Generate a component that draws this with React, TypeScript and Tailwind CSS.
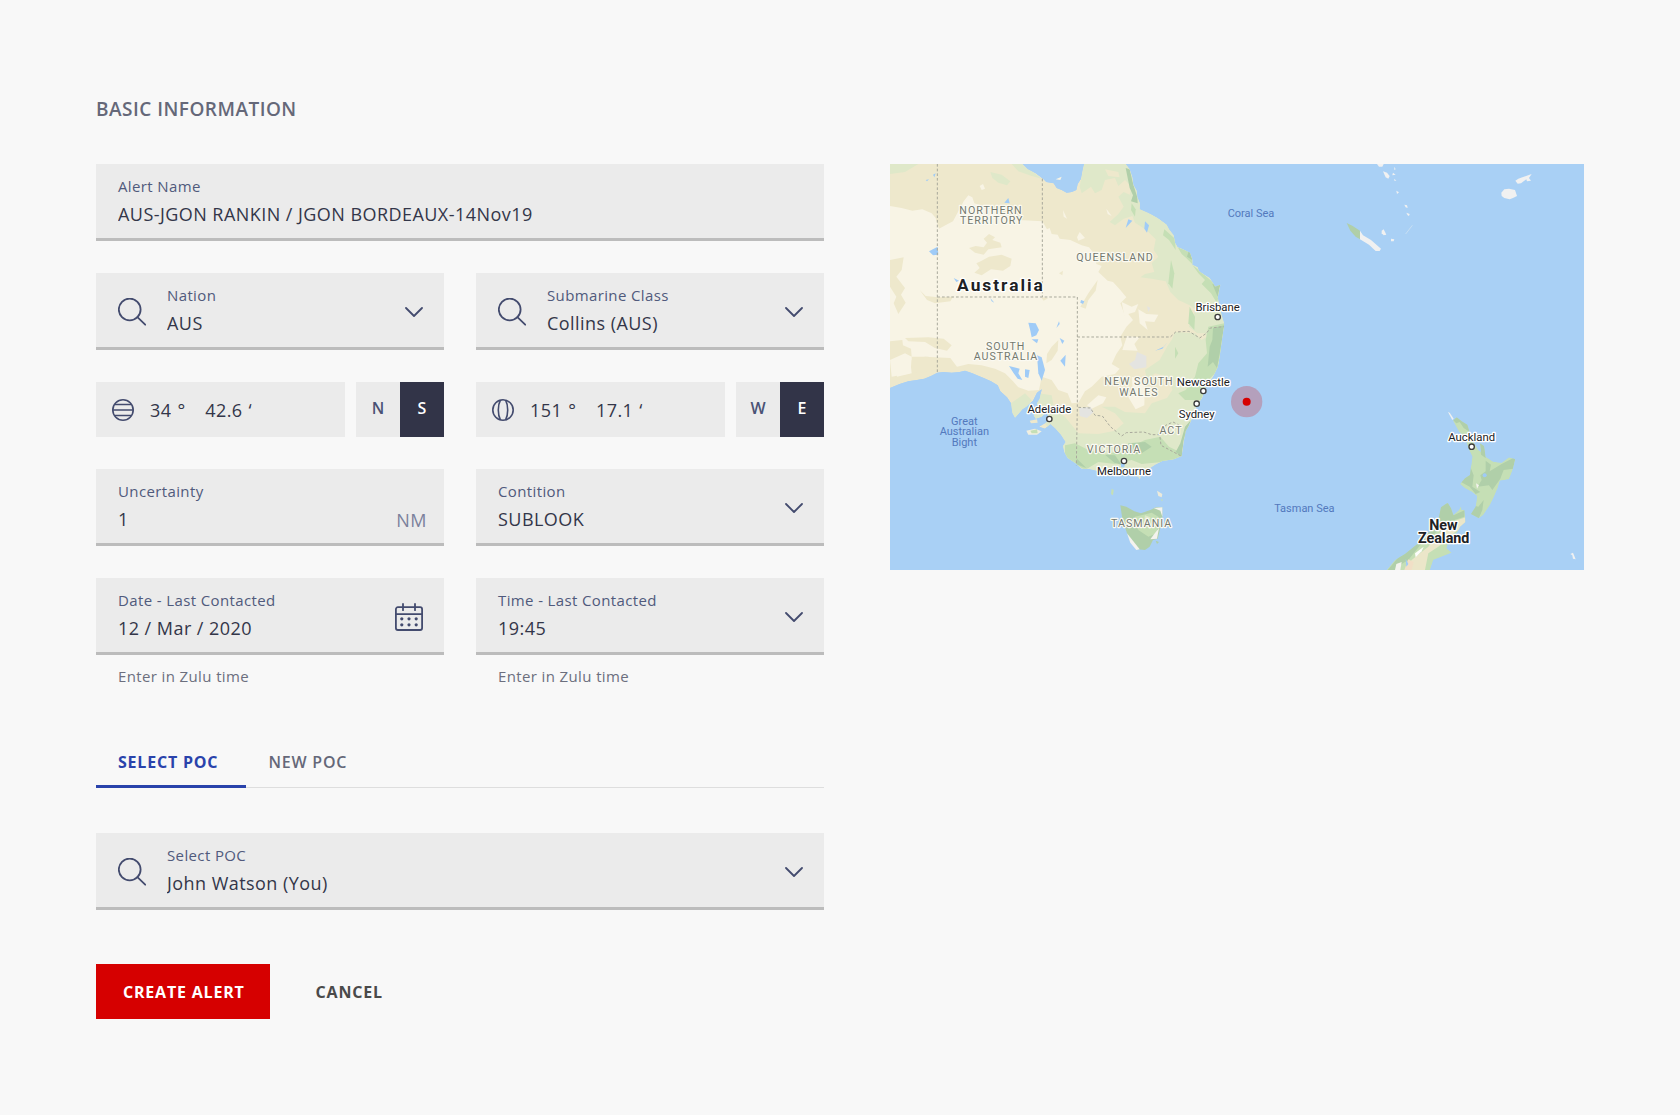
import React, { useId, useState } from "react";
import clsx from "clsx";

const MAINLAND =
  "M15 12H412L428 28L452 40L474 56L484 66L506 70L515 84L530 90L545 98L560 96L574 90L578 72L588 56L592 34L597 12H722L734 28L742 52L745 74L755 92L757 112L765 130L764 148L788 158L800 164L818 174L845 194L852 208L866 226L870 248L878 262L890 266L915 278L922 296L922 314L938 322L942 334L958 344L974 354L984 370L990 380L1006 374L1002 394L998 412L1004 440L1010 466L1018 492L1012 530L1008 560L1004 590L998 622L984 650L962 680L952 712L934 740L924 770L912 796L902 814L896 846L890 888L866 898L832 903L810 914L786 930L768 942L762 952L740 940L716 934L700 930L690 940L664 936L640 933L610 926L590 926L572 910L548 894L538 876L534 858L542 846L528 824L510 804L496 792L480 806L462 800L486 786L492 772L484 756L470 770L452 776L446 766L462 752L456 730L464 716L470 688L456 698L444 722L424 740L412 748L402 760L390 773L382 758L378 730L366 712L346 694L338 676L318 664L296 654L276 646L262 640L240 632L224 636L200 638L176 636L157 638L138 648L118 656L96 660L70 664L44 672L15 684Z";

const NORTH_ISLAND =
  "M654 182L665 172L680 184L697 194L703 214L712 240L730 270L738 276L735 250L747 258L752 290L775 305L800 308L822 292L841 298L833 330L822 358L795 362L788 385L775 415L765 435L745 465L732 475L708 462L722 440L726 408L710 395L690 385L675 372L690 355L705 345L708 320L712 290L700 265L690 232L672 215Z";

const SOUTH_ISLAND =
  "M455 630L480 600L510 582L550 550L570 525L600 505L612 470L618 442L638 428L648 445L655 465L672 450L678 438L680 450L688 450L692 485L675 500L668 515L640 545L635 565L650 578L620 590L595 600L585 630Z";

const regions = [
  { x: 318, y: 162, text: "NORTHERN" },
  { x: 320, y: 193, text: "TERRITORY" },
  { x: 690, y: 303, text: "QUEENSLAND" },
  { x: 362, y: 570, text: "SOUTH" },
  { x: 363, y: 601, text: "AUSTRALIA" },
  { x: 762, y: 676, text: "NEW SOUTH" },
  { x: 762, y: 707, text: "WALES" },
  { x: 858, y: 822, text: "ACT" },
  { x: 687, y: 879, text: "VICTORIA" },
  { x: 770, y: 1102, text: "TASMANIA" },
];

const seas = [
  { x: 1098, y: 172, text: "Coral Sea" },
  { x: 1258, y: 1055, text: "Tasman Sea" },
  { x: 238, y: 794, text: "Great" },
  { x: 238, y: 826, text: "Australian" },
  { x: 238, y: 858, text: "Bight" },
];

const cities = [
  { name: "Brisbane", x: 998, y: 453, dot: 471 },
  { name: "Newcastle", x: 955, y: 678, dot: 693 },
  { name: "Sydney", x: 935, y: 773, dot: 731 },
  { name: "Adelaide", x: 493, y: 758, dot: 777 },
  { name: "Melbourne", x: 717, y: 944, dot: 903 },
  { name: "Auckland", x: 1760, y: 843, dot: 860 },
];

function LocationMap() {
  return (
    <svg
      viewBox="15 12 2082 1217"
      role="img"
      aria-label="Last known location"
      className="block w-full bg-[#a9d0f5] font-[Roboto,sans-serif]"
      textAnchor="middle"
    >
      <defs>
        <clipPath id="mainland">
          <path d={MAINLAND} />
        </clipPath>
        <clipPath id="north-island">
          <path d={NORTH_ISLAND} />
        </clipPath>
        <clipPath id="south-island">
          <path d={SOUTH_ISLAND} />
        </clipPath>
      </defs>

      <g clipPath="url(#mainland)">
        <path d={MAINLAND} fill="#eee8cc" />
        {/* desert */}
        <path
          d="M15 138L50 144L82 152L112 148L140 160L152 174L162 206L184 194L204 184L222 150L236 124L250 106L262 112L268 130L300 140L400 180L472 184L486 208L494 204L500 222L518 224L524 236L556 240L590 256L612 262L630 284L634 312L650 318L640 336L668 362L684 366L704 388L724 412L706 430L718 462L728 494L706 530L712 556L694 582L680 612L704 626L690 642L650 650L620 680L600 694L580 728L560 730L548 700L520 690L500 660L470 650L462 690L430 692L400 682L384 664L360 640L330 626L290 616L250 612L216 620L196 594L120 590L80 600L76 640L20 650L15 600Z"
          fill="#f8f4e5"
        />
        <g fill="#eee8cc">
          <path d="M312 222L330 232L322 240L346 248L350 262L310 268L296 284L270 278L252 264L272 258L296 262L306 248L296 236Z" />
          <path d="M312 290L350 284L380 296L376 318L354 332L318 328L290 346L268 338L284 324L274 310L290 302Z" />
          <path d="M15 300L56 292L50 330L34 350L60 384L48 404L62 428L40 462L26 430L34 410L15 380Z" />
          <path d="M104 390L122 408L160 412L204 410L196 424L150 430L126 420Z" />
          <path d="M15 544L52 540L54 556L78 566L80 590L60 580L15 600Z" />
          <path d="M60 534L130 532L176 536L200 556L186 572L150 564L120 546L70 544Z" />
          <path d="M638 360L632 392L610 420L602 446L586 440L610 400Z" />
          <path d="M520 540L518 572L500 600L484 610L486 582L500 560Z" />
          <path d="M80 590L130 590L160 630L80 640Z" />
          <path d="M522 340L534 332L532 346Z" />
          <path d="M468 412L490 414L476 422Z" />
        </g>
        <g fill="#f8f4e5">
          <path d="M30 610L76 606L80 640L36 650Z" />
          <path d="M710 426L740 440L760 432L750 456L730 462L744 480L724 500Z" />
          <path d="M760 448L784 462L820 464L808 486L780 484L788 510L764 490Z" />
          <path d="M726 528L764 532L748 552L758 572L712 570Z" />
          <path d="M584 216L600 234L580 242L576 232Z" />
          <path d="M294 72L300 86L290 90L284 78Z" />
          <path d="M740 650L780 660L778 736L752 748L730 712L744 700Z" />
          <path d="M640 706L664 712L654 730L620 746L606 736Z" />
          <path d="M534 150L546 176L536 170Z" />
          <path d="M664 146L680 168L668 162Z" />
        </g>
        {/* greener coast */}
        <path
          d="M597 12H730L780 150L860 200L930 310L1010 370L1020 500L1000 620L960 520L936 520L912 500L920 470L934 450L914 436L880 420L856 396L842 364L800 356L766 352L780 342L808 336L800 310L820 290L806 270L812 238L784 210L750 188L742 168L716 176L690 196L674 186L700 162L716 140L700 110L716 96L734 104L740 80L720 60L700 78L690 54L660 60L650 90L630 100L618 80L590 100L584 80Z"
          fill="#dfe8c9"
        />
        <path d="M660 28L700 36L704 52L670 48Z" fill="#eee8cc" />
        <path
          d="M870 516L930 520L950 540L1010 500L1000 640L920 780L900 900L760 960L560 920L520 850L480 790L440 780L460 700L500 706L508 750L540 770L580 820L640 822L690 812L716 790L690 760L650 740L690 740L720 756L780 760L800 730L846 714L862 690L850 650L810 640L786 660L780 630L824 600L846 560L860 540Z"
          fill="#dfe8c9"
        />
        <path d="M15 12H100L60 36L15 42Z" fill="#dfe8c9" />
        <path d="M316 36L350 44L376 64L366 76L340 68L322 54Z" fill="#dfe8c9" />
        <path d="M380 12H414L470 56L440 48L400 34Z" fill="#dfe8c9" />
        <path d="M378 730L420 700L440 720L400 774H380Z" fill="#dfe8c9" />
        <g fill="#c5dfb5">
          <path d="M838 208L870 236L872 270L852 240L834 226Z" />
          <path d="M878 262L916 276L924 314L906 296L890 282Z" />
          <path d="M922 314L990 372L1002 400L996 430L978 400L950 372L960 360L940 340Z" />
          <path d="M858 300L868 340L862 386L850 370Z" />
          <path d="M914 440L930 470L928 510L910 490Z" />
          <path d="M970 500L1018 490L1010 560L1000 630L970 660L948 720L900 720L880 700L902 690L930 650L940 610L966 580L962 540Z" />
          <path d="M540 856L570 850L610 870L660 884L720 868L780 840L826 830L852 860L892 880L890 900L770 912L740 900L690 912L640 906L600 930L570 912L540 890Z" />
          <path d="M870 560L880 580L870 596Z" />
          <path d="M740 130L752 148L750 170L738 150Z" />
        </g>
        <g fill="#b0cfa9">
          <path d="M722 24L734 28L745 74L757 112L758 130L738 124L744 106L734 84Z" />
          <path d="M982 372L1006 374L998 410Z" />
          <path d="M984 504L1018 496L1006 570L996 624L984 606L968 620L974 560L982 540Z" />
          <path d="M900 800L918 780L896 840L890 890L872 876L886 850Z" />
          <path d="M730 850L780 846L800 860L770 880L730 884Z" />
          <path d="M576 896L604 924L572 912Z" />
          <path d="M660 884L690 886L710 914L688 908Z" />
          <path d="M912 270L922 300L906 290Z" />
        </g>
        <g fill="#e4e4e1">
          <path d="M756 576L784 588L784 622L748 628L732 612L750 600Z" />
          <path d="M582 744L616 740L626 756L606 774L584 768Z" />
          <path d="M786 438L796 444L790 456Z" />
        </g>
        {/* lakes */}
        <g fill="#9fcbf7">
          <path d="M132 274L158 260L160 284L144 286Z" />
          <path d="M358 128L370 114L374 130Z" />
          <path d="M144 44L152 40L148 52Z" />
          <path d="M122 60L132 58L126 64Z" />
          <path d="M430 488L452 490L462 510L454 526L440 532L436 512Z" />
          <path d="M440 538L460 538L456 550Z" />
          <path d="M522 484L524 492L514 504Z" />
          <path d="M524 534L538 542L532 552Z" />
          <path d="M542 584L540 620L526 602Z" />
          <path d="M588 420L598 424L594 432L586 428Z" />
          <path d="M316 414L328 428L320 424Z" />
          <path d="M206 354L222 362L214 366Z" />
          <path d="M456 586L470 592L480 630L470 662L460 640Z" />
          <path d="M372 618L404 626L400 640L412 660L398 656L386 640Z" />
          <path d="M420 628L434 630L430 654L420 650Z" />
          <path d="M780 184L792 196L786 218L778 206Z" />
          <path d="M708 910L720 908L718 922H708Z" />
          <path d="M848 546L832 566L810 572L836 560Z" />
          <path d="M730 178L742 182L722 204Z" />
        </g>
      </g>
      <path d="M512 58L530 50L526 60Z" fill="#f8f4e5" />

      {/* islands around the south coast */}
      <path d="M424 812L450 806L470 814L456 824L430 824Z" fill="#f1efe0" />
      <path d="M436 812L456 808L458 820L440 820Z" fill="#c5dfb5" />
      <path d="M434 782L456 778L458 788L438 790Z" fill="#eee8cc" />
      <path d="M680 986L686 990L684 1006L678 1002Z" fill="#c5dfb5" />
      <path d="M816 992L832 1002L830 1012L820 1008Z" fill="#eceadb" />
      <path d="M828 1016L834 1020L830 1024Z" fill="#c5dfb5" />
      <path
        d="M706 1036L724 1040L748 1054L768 1060L796 1050L812 1042L832 1042L832 1080L826 1104L818 1136L804 1140L794 1160L780 1170L758 1168L740 1148L726 1120L712 1076Z"
        fill="#b0cfa9"
      />
      <path d="M750 1070L800 1058L820 1070L816 1120L790 1130L760 1110Z" fill="#c5dfb5" />
      <path d="M780 1066L796 1072L794 1108L776 1092Z" fill="#dfe8c9" />
      <path d="M806 1044L832 1042L832 1070L826 1052Z" fill="#f4f3ee" />
      <path d="M726 1120L764 1168L754 1170L736 1148Z" fill="#f4f3ee" />
      <path d="M806 1124L822 1104L816 1136L796 1138Z" fill="#f4f3ee" />
      <path d="M812 1142L822 1146L816 1152Z" fill="#b0cfa9" />
      <path d="M758 948L768 952L764 958Z" fill="#dfe8c9" />

      {/* state borders */}
      <g fill="none" stroke="#a9a99c" strokeWidth="3" strokeDasharray="8 6">
        <path d="M157 12V638" />
        <path d="M472 56V411" />
        <path d="M157 411H577V740L574 916" />
        <path d="M577 531H856L872 516L912 514L944 534L964 520L976 504L1016 500" />
        <path d="M580 742L616 744L630 766L652 768L676 800L710 828L724 818L776 816L800 824L824 824L828 856L888 888" />
        <path d="M824 822L842 796L864 786L884 796" />
      </g>

      {/* pacific islands */}
      <g transform="translate(1050 0)" fill="#f1f1f1">
        <path d="M335 189L352 197L375 212V238L362 230L346 212Z" fill="#b0cfa9" />
        <path d="M375 212L384 226L408 240L438 266L434 273H422L402 254L375 238Z" />
        <path d="M426 12H446L442 20L432 20Z" />
        <path d="M444 34L456 38L464 48L460 56L452 52Z" />
        <path d="M474 38L482 44L472 46Z" />
        <path d="M478 20L482 28L478 30Z" />
        <path d="M478 56L484 62H478Z" />
        <path d="M484 92L492 97L486 102Z" />
        <path d="M508 134L516 136L518 144L512 142Z" />
        <path d="M514 158L524 162L522 168L518 166Z" />
        <path d="M440 212L446 208L454 224L446 226L440 220Z" />
        <path d="M468 236L478 238L476 244H468Z" />
        <path d="M532 196L512 222" stroke="#d7e6f2" strokeWidth="2" />
        <path d="M799 98L808 88L822 86L840 90L846 108L834 114L824 118L808 114L800 108Z" />
        <path d="M841 62L850 56L862 52L890 42L882 54L888 62L876 64L874 58L858 70L848 71Z" />
      </g>

      {/* new zealand */}
      <g transform="translate(1050 600)">
        <path d="M639 156L644 158L656 176L652 180Z" fill="#f1f1f1" />
        <g clipPath="url(#north-island)">
          <path d={NORTH_ISLAND} fill="#c5dfb5" />
          <g fill="#b0cfa9">
            <path d="M650 176L668 168L700 190L704 216L686 204L674 186L664 190Z" />
            <path d="M735 250L750 256L752 294L738 284Z" />
            <path d="M752 302L768 314L764 334L800 312L842 290L834 326L806 330L796 356L772 390L762 376L728 380L740 360L736 346L752 334Z" />
            <path d="M706 320L716 346L712 380L736 396L722 402L704 380L678 366Z" />
            <path d="M714 436L730 440L746 420L742 450L730 478L706 464Z" />
          </g>
          <circle cx="749" cy="346" r="6" fill="#9fcbf7" />
          <path d="M723 370L732 376L726 386Z" fill="#f4f3ee" />
        </g>
        <g clipPath="url(#south-island)">
          <path d={SOUTH_ISLAND} fill="#c5dfb5" />
          <path d="M612 430H650L656 466L690 450L688 470L640 486L600 520L560 550L520 600L500 612L480 640H450L500 580L600 500Z" fill="#b0cfa9" />
          <path d="M668 480L692 472L690 500L660 516L610 560L580 580L570 630H510L530 600L580 560L630 500Z" fill="#ebe6c9" />
          <path d="M484 612L500 606L496 630H480Z" fill="#f4f3ee" />
          <path d="M540 580L566 560L560 574L542 592Z" fill="#fdfdfb" />
          <path d="M520 598L536 606L530 630H508Z" fill="#f1dfc6" />
          <path d="M512 596L520 612L514 620Z" fill="#9fcbf7" />
        </g>
        <path d="M1006 582L1014 578L1022 598L1014 596L1012 586Z" fill="#f1f1f1" />
      </g>

      {/* labels */}
      <g fontSize="32" letterSpacing="3" fill="#74796f" stroke="#fbfaf2" strokeWidth="7" strokeLinejoin="round" paintOrder="stroke">
        {regions.map((r) => (
          <text key={r.text} x={r.x} y={r.y}>
            {r.text}
          </text>
        ))}
      </g>
      <g fontSize="33" fill="#5379bd">
        {seas.map((s) => (
          <text key={s.text} x={s.x} y={s.y}>
            {s.text}
          </text>
        ))}
      </g>
      <g fill="#202124" stroke="#ffffff" strokeWidth="8" strokeLinejoin="round" paintOrder="stroke">
        <g fontSize="34">
          {cities.map((c) => (
            <text key={c.name} x={c.x} y={c.y}>
              {c.name}
            </text>
          ))}
        </g>
        <text x="348" y="392" fontSize="52" fontWeight="700" letterSpacing="6">
          Australia
        </text>
        <g fontSize="43" fontWeight="700">
          <text x="1675" y="1109">New</text>
          <text x="1676" y="1150">Zealand</text>
        </g>
      </g>
      {cities.map((c) => (
        <circle key={c.name} cx={c.x} cy={c.dot} r="8" fill="#ffffff" stroke="#3c3c3c" strokeWidth="4" />
      ))}

      <circle cx="1085" cy="725" r="47" fill="#d60000" fillOpacity="0.23" />
      <circle cx="1085" cy="725" r="12" fill="#d60000" />
    </svg>
  );
}

function SearchIcon() {
  return (
    <svg viewBox="0 0 28 28" className="size-7 shrink-0" fill="none" stroke="#434b6e" strokeWidth="1.8" strokeLinecap="round" aria-hidden="true">
      <circle cx="11.7" cy="11.5" r="10.9" />
      <path d="M19.4 19.1L27.2 26.7" />
    </svg>
  );
}

function ChevronIcon() {
  return (
    <svg viewBox="0 0 18 10" className="pointer-events-none w-[18px] shrink-0" fill="none" stroke="#434b6e" strokeWidth="1.8" strokeLinecap="round" strokeLinejoin="round" aria-hidden="true">
      <path d="M1 1L9 9L17 1" />
    </svg>
  );
}

function CalendarIcon() {
  return (
    <svg viewBox="0 0 28 28" className="size-7" fill="none" stroke="#434b6e" strokeWidth="1.8" strokeLinecap="round" aria-hidden="true">
      <rect x="0.9" y="4.2" width="26.2" height="22.8" rx="2" />
      <path d="M1 11.2H27M8 0.9V7.2M20 0.9V7.2" />
      <g fill="#434b6e" stroke="none">
        {[6.8, 14, 21.2].map((x) => (
          <React.Fragment key={x}>
            <circle cx={x} cy="15.8" r="1.6" />
            <circle cx={x} cy="21.8" r="1.6" />
          </React.Fragment>
        ))}
      </g>
    </svg>
  );
}

function LatitudeIcon() {
  return (
    <svg viewBox="0 0 22 22" className="size-[22px] shrink-0" fill="none" stroke="#434b6e" strokeWidth="1.6" aria-hidden="true">
      <circle cx="11" cy="11" r="10.2" />
      <path d="M2.8 5.5H19.2M0.8 11H21.2M2.8 16.5H19.2" />
    </svg>
  );
}

function LongitudeIcon() {
  return (
    <svg viewBox="0 0 22 22" className="size-[22px] shrink-0" fill="none" stroke="#434b6e" strokeWidth="1.6" aria-hidden="true">
      <circle cx="11" cy="11" r="10.2" />
      <path d="M8.4 1.2C5.6 6.5 5.6 15.5 8.4 20.8M13.6 1.2C16.4 6.5 16.4 15.5 13.6 20.8" />
    </svg>
  );
}

const valueClass =
  "block w-full min-w-0 appearance-none bg-transparent p-0 text-lg leading-7 tracking-wide text-[#333649] outline-0";

type FieldProps = {
  label: string;
  value: string;
  select?: boolean;
  search?: boolean;
  suffix?: React.ReactNode;
  className?: string;
};

function Field({ label, value, select, search, suffix, className }: FieldProps) {
  const id = useId();

  return (
    <div
      className={clsx(
        "flex items-center bg-[#ebebeb] pr-[21px] pl-[22px] shadow-[inset_0_-3px_0_#bcbcbc]",
        className
      )}
    >
      {search && (
        <span className="mr-[21px]">
          <SearchIcon />
        </span>
      )}
      <div className="flex min-w-0 flex-1 flex-col gap-1 pt-3 pb-[13px]">
        <label htmlFor={id} className="text-[15px] leading-5 tracking-wide text-[#505a7c]">
          {label}
        </label>
        {select ? (
          <select id={id} defaultValue={value} className={valueClass}>
            <option>{value}</option>
          </select>
        ) : (
          <input id={id} type="text" defaultValue={value} className={valueClass} />
        )}
      </div>
      {suffix}
      {select && <ChevronIcon />}
    </div>
  );
}

type CoordinateProps = {
  name: string;
  icon: React.ReactNode;
  degrees: string;
  minutes: string;
  directions: string[];
  initial: string;
};

const coordClass = "field-sizing-content bg-transparent p-0 text-lg leading-7 tracking-wide outline-0";

function Coordinate({ name, icon, degrees, minutes, directions, initial }: CoordinateProps) {
  const [direction, setDirection] = useState(initial);

  return (
    <div className="flex gap-[11px]">
      <div className="flex min-w-0 flex-1 items-center bg-[#ebebeb] pl-4 text-lg leading-7 text-[#333649]">
        {icon}
        <div className="ml-4 flex items-center">
          <input type="text" aria-label={`${name} degrees`} defaultValue={degrees} className={coordClass} />
          <span className="ml-[6px]">°</span>
          <input type="text" aria-label={`${name} minutes`} defaultValue={minutes} className={clsx(coordClass, "ml-5")} />
          <span className="ml-[6px]">‘</span>
        </div>
      </div>
      <div role="group" aria-label={`${name} direction`} className="flex">
        {directions.map((d) => (
          <button
            key={d}
            type="button"
            aria-pressed={d === direction}
            onClick={() => setDirection(d)}
            className={clsx(
              "w-11 pt-[14px] pb-[17px] text-base leading-6 font-semibold",
              d === direction ? "bg-[#323448] text-white" : "bg-[#ebebeb] text-[#4a5275]"
            )}
          >
            {d}
          </button>
        ))}
      </div>
    </div>
  );
}

const tabs = ["SELECT POC", "NEW POC"];

export default function App() {
  const [activeTab, setActiveTab] = useState(tabs[0]);

  return (
    <main className="min-h-screen bg-[#f8f8f8] px-24 py-24 font-['Open_Sans',sans-serif]">
      <h1 className="text-[19px] leading-[26px] font-semibold tracking-wide text-[#656879]">BASIC INFORMATION</h1>

      <div className="mt-[42px] grid grid-cols-[728fr_694fr] items-start gap-[66px]">
        <form onSubmit={(e) => e.preventDefault()}>
          <div className="grid grid-cols-2 gap-8">
            <Field label="Alert Name" value="AUS-JGON RANKIN / JGON BORDEAUX-14Nov19" className="col-span-2" />
            <Field label="Nation" value="AUS" select search />
            <Field label="Submarine Class" value="Collins (AUS)" select search />
            <Coordinate
              name="Latitude"
              icon={<LatitudeIcon />}
              degrees="34"
              minutes="42.6"
              directions={["N", "S"]}
              initial="S"
            />
            <Coordinate
              name="Longitude"
              icon={<LongitudeIcon />}
              degrees="151"
              minutes="17.1"
              directions={["W", "E"]}
              initial="E"
            />
            <Field
              label="Uncertainty"
              value="1"
              suffix={<span className="mt-6 -mr-1 text-lg leading-7 tracking-wide text-[#7b819c]">NM</span>}
            />
            <Field label="Contition" value="SUBLOOK" select />
            <div>
              <Field
                label="Date - Last Contacted"
                value="12 / Mar / 2020"
                suffix={
                  <button type="button" aria-label="Open calendar">
                    <CalendarIcon />
                  </button>
                }
              />
              <p className="mt-[11px] pl-[22px] text-[15px] leading-5 tracking-wide text-[#6c6f7e]">
                Enter in Zulu time
              </p>
            </div>
            <div>
              <Field label="Time - Last Contacted" value="19:45" select />
              <p className="mt-[11px] pl-[22px] text-[15px] leading-5 tracking-wide text-[#6c6f7e]">
                Enter in Zulu time
              </p>
            </div>
          </div>

          <div role="tablist" className="mt-[51px] flex border-b border-[#dedede]">
            {tabs.map((tab) => (
              <button
                key={tab}
                type="button"
                role="tab"
                aria-selected={tab === activeTab}
                onClick={() => setActiveTab(tab)}
                className={clsx(
                  "-mb-px border-b-3 pt-[13px] pr-7 pb-[11px] pl-[22px] text-base leading-6 tracking-wider",
                  tab === activeTab
                    ? "border-[#2a43ab] font-bold text-[#2a43ab]"
                    : "border-transparent font-semibold text-[#656879]"
                )}
              >
                {tab}
              </button>
            ))}
          </div>

          <Field label="Select POC" value="John Watson (You)" select search className="mt-[45px]" />

          <div className="mt-[54px] flex gap-[19px] text-base leading-6 font-bold tracking-wider">
            <button type="submit" className="bg-[#d60000] pt-4 pr-[25px] pb-[15px] pl-[27px] text-white">
              CREATE ALERT
            </button>
            <button type="button" className="pt-4 pr-[25px] pb-[15px] pl-[27px] text-[#4a4a4a]">
              CANCEL
            </button>
          </div>
        </form>

        <LocationMap />
      </div>
    </main>
  );
}
